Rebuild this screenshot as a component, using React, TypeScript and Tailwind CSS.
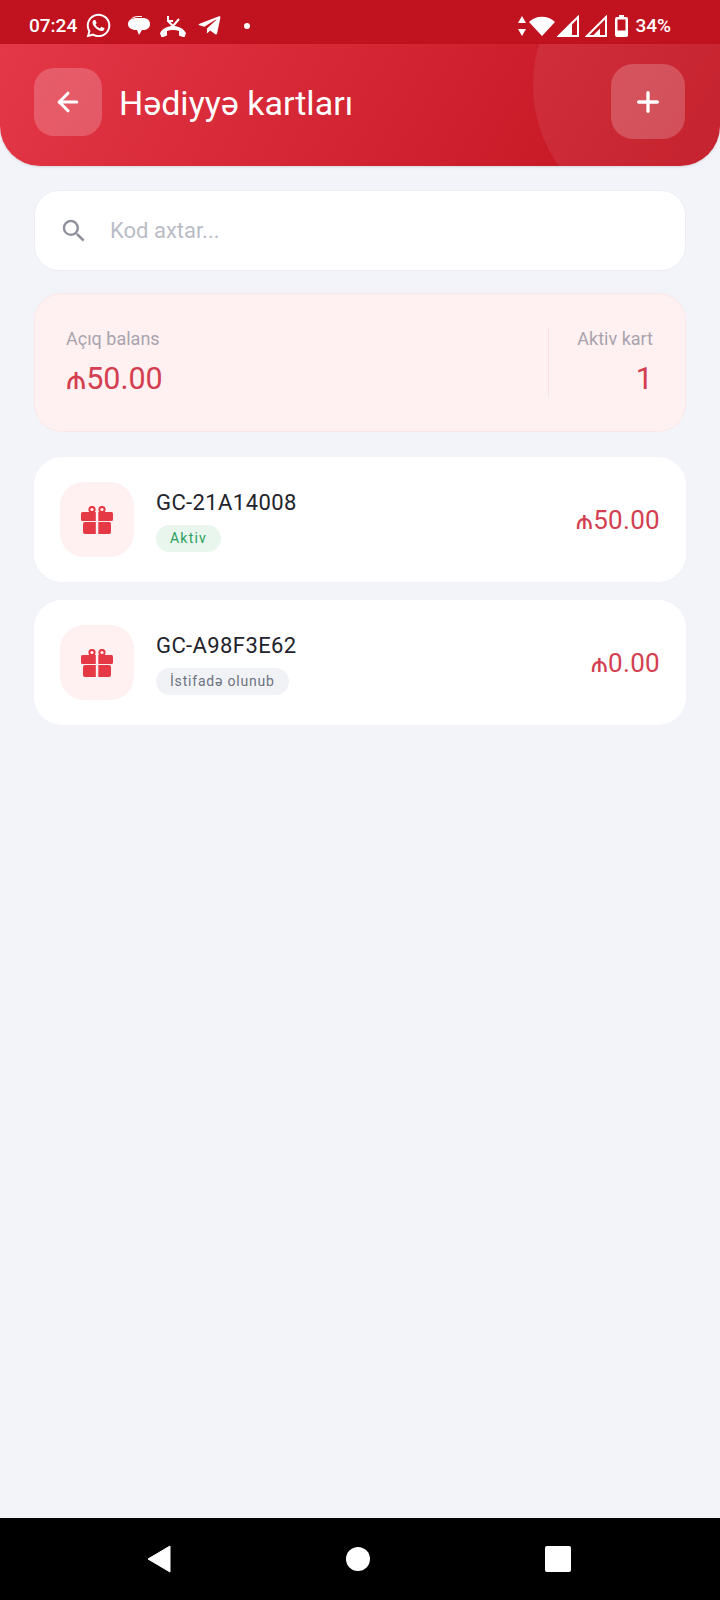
import { ArrowLeft, Plus } from "lucide-react";
import { FaTelegramPlane, FaWhatsapp } from "react-icons/fa";
import { MdSearch } from "react-icons/md";

function GiftIcon() {
  return (
    <svg viewBox="0 0 32 28" className="h-[28px] w-[32px]">
      <circle cx="11" cy="3.500" r="2.600" fill="none" stroke="#e63946" strokeWidth="2" />
      <circle cx="21" cy="3.500" r="2.600" fill="none" stroke="#e63946" strokeWidth="2" />
      <rect x="0" y="6" width="32" height="9" rx="1.500" fill="#e63946" />
      <rect x="2" y="16" width="28" height="12" rx="2" fill="#e63946" />
      <rect x="14.800" y="6" width="2.500" height="22" fill="#fff0f1" />
    </svg>
  );
}

function StatusBar() {
  return (
    <div className="flex h-[44px] shrink-0 items-center justify-between bg-[#c1121f] pl-[29px] pr-[49px] pt-[7px] text-white">
      <div className="flex items-center">
        <span className="text-[19px] font-medium leading-none">07:24</span>
        <FaWhatsapp size={27} className="ml-[8px]" />
        <svg viewBox="0 0 22 20" className="ml-[16px] h-[20px] w-[22px]" fill="currentColor">
          <path d="M9 2h6c4 0 7 2 7 6s-3 6-7 6h-1l-3 5-2-5c-5 0-9-2-9-6s4-6 9-6z" />
          <path d="M3 3c1-2 4-3 7-3h4v1h-4c-3 0-5 1-7 2z" />
        </svg>
        <svg viewBox="0 0 26 24" className="ml-[10px] h-[24px] w-[26px]" fill="currentColor">
          <path d="M8 2v5h5M8 7l5 5 6-7" fill="none" stroke="currentColor" strokeWidth="2" />
          <path d="M0 19c3-5 8-7 13-7s10 2 13 7l-1 3c0 1-1 1-2 1l-3-1c-1 0-1-1-1-2v-3c-2-1-4-1-6-1s-4 0-6 1v3c0 1 0 2-1 2l-3 1c-1 0-2 0-2-1z" />
        </svg>
        <FaTelegramPlane size={25} className="ml-[11px]" />
        <span className="ml-[22px] h-[6px] w-[6px] rounded-full bg-white" />
      </div>
      <div className="flex items-center">
        <svg viewBox="0 0 8 20" className="h-[20px] w-[8px]" fill="currentColor">
          <path d="M4 0l4 7H0zM4 20l-4-7h8z" />
        </svg>
        <svg viewBox="0 0 26 20" className="ml-[3px] h-[20px] w-[26px]" fill="currentColor">
          <path d="M0 6c7-7 19-7 26 0L13 20z" />
        </svg>
        <svg viewBox="0 0 22 22" className="ml-[2px] h-[22px] w-[22px]" fill="none" stroke="currentColor" strokeWidth="2">
          <path d="M2 21L21 2v19z" />
          <path d="M2 21L14 9v12z" fill="currentColor" />
        </svg>
        <svg viewBox="0 0 22 22" className="ml-[6px] h-[22px] w-[22px]" fill="none" stroke="currentColor" strokeWidth="2">
          <path d="M2 21L21 2v19z" />
          <path d="M9 21l5-5v5z" fill="currentColor" />
        </svg>
        <svg viewBox="0 0 13 22" className="ml-[8px] h-[22px] w-[13px]" fill="currentColor">
          <path d="M4 0h5v2h2a2 2 0 012 2v16a2 2 0 01-2 2H2a2 2 0 01-2-2V4a2 2 0 012-2h2zM2.500 4.500v11h8v-11z" fillRule="evenodd" />
        </svg>
        <span className="ml-[7px] text-[19px] font-medium leading-none">34%</span>
      </div>
    </div>
  );
}

function GiftCard({ code, amount, status, active }: { code: string; amount: string; status: string; active?: boolean }) {
  return (
    <div className="flex h-[125px] items-center rounded-[28px] bg-white pl-[26px] pr-[26px]">
      <div className="flex h-[75px] w-[74px] items-center justify-center rounded-[24px] bg-[#fff0f1]">
        <GiftIcon />
      </div>
      <div className="ml-[22px] flex-1 pt-[2px]">
        <div className="text-[22px] leading-[26px] tracking-[0.4px] text-[#22232b]">{code}</div>
        <span
          className={
            active
              ? "mt-[9px] inline-block rounded-full bg-[#e8f6ee] px-[14px] text-[14px] leading-[27px] tracking-[1.2px] text-[#2a9d5c]"
              : "mt-[9px] inline-block rounded-full bg-[#f1f2f5] px-[14px] text-[14px] leading-[27px] tracking-[0.8px] text-[#6b7280]"
          }
        >
          {status}
        </span>
      </div>
      <div className="text-[26px] leading-none tracking-[0.3px] text-[#d33f50]">{amount}</div>
    </div>
  );
}

export default function App() {
  return (
    <div className="flex h-[1600px] flex-col overflow-hidden bg-[#f3f4f9] font-['Roboto','DejaVu_Sans',sans-serif]">
      <StatusBar />

      <header className="relative flex h-[122px] shrink-0 items-start justify-between overflow-hidden rounded-b-[40px] bg-[linear-gradient(120deg,#e43747,#c1121f)] pl-[34px] pr-[35px] pt-[20px] shadow-sm">
        <div className="absolute right-[-93px] top-[-99px] h-[280px] w-[280px] rounded-full bg-white/[0.07]" />
        <div className="relative flex items-center">
          <button className="mt-[4px] flex h-[68px] w-[68px] items-center justify-center rounded-[20px] bg-white/20" aria-label="Geri">
            <ArrowLeft size={30} strokeWidth={2.5} className="text-white" />
          </button>
          <h1 className="ml-[17px] mt-[6px] text-[34px] font-normal text-white">Hədiyyə kartları</h1>
        </div>
        <button className="relative flex h-[75px] w-[74px] items-center justify-center rounded-[22px] bg-white/20" aria-label="Əlavə et">
          <Plus size={32} strokeWidth={2.5} className="text-white" />
        </button>
      </header>

      <main className="flex flex-1 flex-col px-[34px] pt-[25px]">
        <div className="mx-[1px] flex h-[79px] items-center rounded-[24px] bg-white pl-[24px] shadow-[0_0_0_1px_#eceef3]">
          <MdSearch size={30} className="text-[#8f929c]" />
          <span className="ml-[21px] text-[22px] text-[#b9bcc6]">Kod axtar...</span>
        </div>

        <div className="mt-[23px] flex h-[139px] items-center justify-between rounded-[28px] border border-[#fde6e8] bg-[#fff0f1] pl-[31px] pr-[32px]">
          <div>
            <div className="text-[18px] leading-[22px] text-[#a8a3ae]">Açıq balans</div>
            <div className="mt-[10px] text-[30.5px] leading-[38px] text-[#d33f50]">₼50.00</div>
          </div>
          <div className="flex items-center">
            <div className="h-[70px] w-px bg-[#fbe3e5]" />
            <div className="ml-[28px] text-right">
              <div className="text-[18px] leading-[22px] text-[#a8a3ae]">Aktiv kart</div>
              <div className="mt-[10px] text-[30.5px] leading-[38px] text-[#d33f50]">1</div>
            </div>
          </div>
        </div>

        <div className="mt-[25px] flex flex-col gap-[18px]">
          <GiftCard code="GC-21A14008" amount="₼50.00" status="Aktiv" active />
          <GiftCard code="GC-A98F3E62" amount="₼0.00" status="İstifadə olunub" />
        </div>
      </main>

      <nav className="flex h-[82px] shrink-0 items-center bg-black pl-[147px] pr-[149px]">
        <div className="flex w-full items-center justify-between">
          <svg viewBox="0 0 24 28" className="h-[28px] w-[24px]" fill="white" stroke="white" strokeWidth="1" strokeLinejoin="round">
            <path d="M23 1v26L1 14z" />
          </svg>
          <div className="h-[24px] w-[24px] rounded-full bg-white" />
          <div className="h-[26px] w-[26px] rounded-[2px] bg-white" />
        </div>
      </nav>
    </div>
  );
}
